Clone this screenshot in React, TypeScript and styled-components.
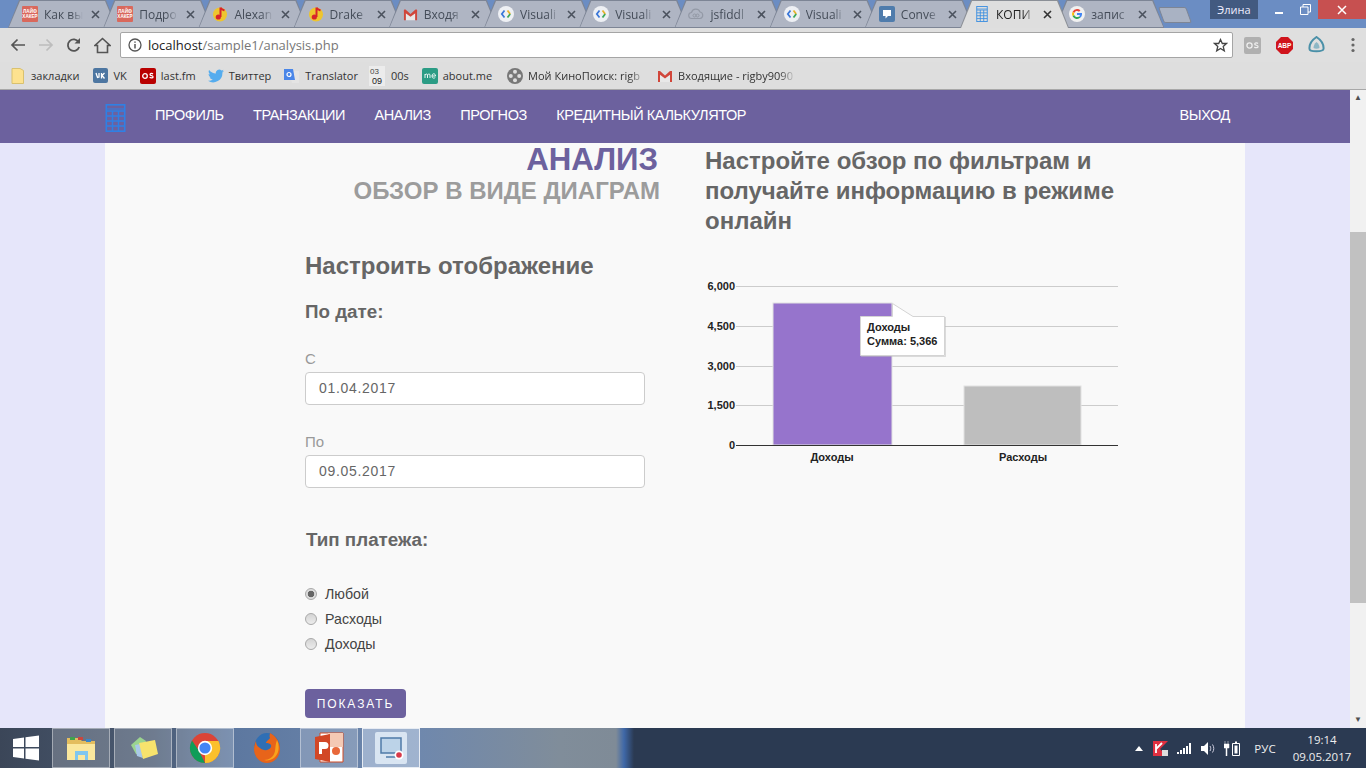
import styled, { createGlobalStyle } from 'styled-components'

const GlobalStyle = createGlobalStyle`
  html, body { margin: 0; padding: 0; height: 100%; overflow: hidden; }
  body { font-family: 'Liberation Sans', Arial, sans-serif; }
  * { box-sizing: border-box; }
`

const Screen = styled.div`
  width: 1366px;
  height: 768px;
  display: flex;
  flex-direction: column;
  overflow: hidden;
`

/* ---------- browser tabs ---------- */
const TabStrip = styled.div`
  height: 28px;
  flex: none;
  background: #6b8dc3;
  display: flex;
  align-items: flex-end;
  padding-left: 8px;
  position: relative;
`
const TabShape = styled.div<{ $active?: boolean }>`
  width: 109px;
  height: 28px;
  margin-right: -13.8px;
  flex: none;
  position: relative;
  display: flex;
  align-items: center;
  padding: 0 0 0 14px;
  gap: 6px;
  z-index: ${(p) => (p.$active ? 2 : 1)};
  clip-path: polygon(0 100%, 11px 0, calc(100% - 11px) 0, 100% 100%);
  background: ${(p) => (p.$active ? '#8b8f96' : '#7d8595')};
  &::before {
    content: '';
    position: absolute;
    inset: 1px 1px ${(p) => (p.$active ? '0' : '1px')} 1px;
    clip-path: polygon(0 100%, 11px 0, calc(100% - 11px) 0, 100% 100%);
    background: ${(p) => (p.$active ? '#dedede' : '#afb5c3')};
  }
  & > * { position: relative; }
  svg { flex: none; }
`
const TabTitle = styled.span<{ $active?: boolean }>`
  width: 39px;
  font-family: 'Open Sans', sans-serif;
  font-size: 12px;
  color: ${(p) => (p.$active ? '#222' : '#444c58')};
  white-space: nowrap;
  -webkit-mask-image: linear-gradient(to right, #000 70%, transparent);
  mask-image: linear-gradient(to right, #000 70%, transparent);
`
const TabClose = styled.span<{ $active?: boolean }>`
  width: 9px;
  height: 9px;
  margin-left: 2px;
  color: ${(p) => (p.$active ? '#333' : '#4b525e')};
  display: flex;
`
const NewTab = styled.div`
  width: 28px;
  height: 16px;
  margin: 0 0 5px 11px;
  flex: none;
  background: #a9b2c3;
  border: 1px solid #7d8595;
  border-radius: 2px;
  transform: skewX(20deg);
`
const WindowControls = styled.div`
  position: absolute;
  top: 0;
  right: 0;
  height: 20px;
  display: flex;
`
const UserName = styled.div`
  width: 48px;
  height: 19px;
  margin-right: 8px;
  background: #425a80;
  color: #eef;
  font-family: 'Open Sans', sans-serif;
  font-size: 11px;
  display: flex;
  align-items: center;
  justify-content: center;
`
const WinButton = styled.div<{ $close?: boolean }>`
  width: ${(p) => (p.$close ? '48px' : '26px')};
  height: 19px;
  display: flex;
  align-items: center;
  justify-content: center;
  background: ${(p) => (p.$close ? '#c75050' : 'transparent')};
  color: #fff;
`

/* ---------- toolbar ---------- */
const Toolbar = styled.div`
  height: 34px;
  flex: none;
  background: #dfdfdf;
  display: flex;
  align-items: center;
  padding: 0 0 0 8px;
`
const NavIcon = styled.div<{ $w: number }>`
  width: ${(p) => p.$w}px;
  height: 20px;
  display: flex;
  align-items: center;
  justify-content: center;
  flex: none;
`
const Omnibox = styled.div`
  width: 1113px;
  height: 26px;
  background: #fff;
  border: 1px solid #a5a5a5;
  border-radius: 2px;
  display: flex;
  align-items: center;
  padding: 0 5px 0 7px;
  font-family: 'Open Sans', sans-serif;
  font-size: 13px;
  color: #222;
`
const UrlHost = styled.span`
  margin-left: 6px;
`
const UrlPath = styled.span`
  color: #777;
  flex: 1;
`
const StarIcon = styled.svg`
  margin-right: -1px;
`
const Extensions = styled.div`
  flex: 1;
  display: flex;
  align-items: center;
  padding-left: 11px;
  gap: 15px;
`
const MenuDots = styled.svg`
  margin-left: 11px;
`

/* ---------- bookmarks ---------- */
const BookmarkBar = styled.div`
  height: 28px;
  flex: none;
  background: #dedede;
  border-bottom: 1px solid #a8a8a8;
  display: flex;
  align-items: center;
`
const Bookmark = styled.div<{ $left: number; $fade?: number }>`
  margin-left: ${(p) => p.$left}px;
  display: flex;
  align-items: center;
  gap: 5px;
  flex: none;
  font-family: 'Open Sans', sans-serif;
  font-size: 11px;
  color: #333;
  white-space: nowrap;
  svg { flex: none; }
  ${(p) =>
    p.$fade
      ? `width: ${p.$fade}px;
         -webkit-mask-image: linear-gradient(to right, #000 88%, transparent);
         mask-image: linear-gradient(to right, #000 88%, transparent);`
      : ''}
`
const BookmarkLabel = styled.span<{ $shift?: number }>`
  margin-left: ${(p) => p.$shift ?? 0}px;
`

/* ---------- the page ---------- */
const Viewport = styled.div`
  flex: 1;
  min-height: 0;
  display: flex;
  background: #e6e6fa;
`
const PageArea = styled.div`
  flex: 1;
  display: flex;
  flex-direction: column;
  min-width: 0;
`
const Navbar = styled.nav`
  height: 53px;
  flex: none;
  background: #6c619e;
  display: flex;
  align-items: center;
  padding: 0 120px 0 105px;
  svg { margin-top: 3px; }
`
const NavLinks = styled.div`
  display: flex;
  gap: 29.5px;
  margin-left: 29px;
  flex: 1;
`
const NavLink = styled.a`
  margin-top: -3px;
  color: #fff;
  font-size: 14.5px;
  letter-spacing: -0.42px;
  white-space: nowrap;
`
const Panel = styled.main`
  width: 1140px;
  margin-left: 105px;
  flex: 1;
  min-height: 0;
  overflow: hidden;
  background: #f9f9f9;
  display: grid;
  grid-template-columns: 555px 1fr;
  column-gap: 45px;
`
const LeftColumn = styled.section`
  padding: 3px 0 0 200px;
`
const RightColumn = styled.section`
  padding-top: 3px;
`
const PageTitle = styled.h1`
  margin: -1px 2px 1px 0;
  font-size: 31.2px;
  line-height: 30px;
  font-weight: 700;
  text-align: right;
  color: #6c619e;
`
const PageSubtitle = styled.h2`
  margin: 0;
  font-size: 24px;
  line-height: 30px;
  font-weight: 700;
  text-align: right;
  white-space: nowrap;
  color: #9c9c9c;
`
const Lead = styled.h2`
  margin: 0;
  width: 430px;
  font-size: 24px;
  line-height: 30px;
  font-weight: 700;
  color: #666;
`
const FormTitle = styled.h3`
  margin: 45px 0 0;
  font-size: 24px;
  line-height: 30px;
  font-weight: 700;
  color: #666;
`
const Subheading = styled.h4<{ $top: number; $left?: number }>`
  margin: ${(p) => p.$top}px 0 0 ${(p) => p.$left ?? 0}px;
  font-size: 18.8px;
  line-height: 24px;
  font-weight: 700;
  color: #666;
`
const FieldLabel = styled.label<{ $top: number }>`
  display: block;
  margin-top: ${(p) => p.$top}px;
  font-size: 15px;
  line-height: 18px;
  color: #999;
`
const DateInput = styled.div`
  width: 340px;
  height: 33px;
  margin-top: 4px;
  padding: 0 13px 1px;
  display: flex;
  align-items: center;
  background: #fff;
  border: 1px solid #ccc;
  border-radius: 4px;
  font-size: 14px;
  letter-spacing: 0.7px;
  color: #666;
`
const RadioList = styled.div`
  margin-top: 33px;
  display: flex;
  flex-direction: column;
  gap: 7px;
`
const RadioRow = styled.div`
  height: 18px;
  display: flex;
  align-items: center;
  gap: 8px;
  font-size: 14.2px;
  color: #444;
`
const RadioDot = styled.span<{ $on?: boolean }>`
  width: 12px;
  height: 12px;
  border-radius: 50%;
  border: 1px solid #a9a9a9;
  background: ${(p) =>
    p.$on
      ? 'radial-gradient(circle, #666 0 3px, #ddd 3.6px)'
      : 'linear-gradient(#d4d4d4, #ececec)'};
`
const ShowButton = styled.button`
  display: block;
  width: 101px;
  height: 29px;
  margin-top: 36px;
  padding: 0;
  border: 0;
  border-radius: 4px;
  background: #6c619e;
  color: #fff;
  font-family: 'Liberation Sans', sans-serif;
  font-size: 12px;
  letter-spacing: 1.9px;
`
const ChartBox = styled.div`
  margin: 40px 0 0 -5px;
  width: 430px;
  height: 190px;
`
const ChartSvg = styled.svg`
  display: block;
  text {
    font-family: 'Liberation Sans', sans-serif;
    font-size: 11px;
    font-weight: 700;
    fill: #222;
  }
`

/* ---------- scrollbar ---------- */
const ScrollBar = styled.div`
  width: 16px;
  flex: none;
  background: #f1f1f1;
  display: flex;
  flex-direction: column;
  align-items: center;
  color: #505050;
  font-size: 8px;
  line-height: 16px;
`
const ScrollArrow = styled.div`
  height: 16px;
  flex: none;
`
const ScrollTrack = styled.div`
  flex: 1;
  width: 100%;
  padding-top: 126px;
`
const ScrollThumb = styled.div`
  height: 371px;
  background: #c1c1c1;
`

/* ---------- taskbar ---------- */
const Taskbar = styled.footer`
  height: 40px;
  flex: none;
  display: flex;
  align-items: stretch;
  background: linear-gradient(
    90deg,
    #3b4658 0,
    #4a5a72 150px,
    #5d78a0 236px,
    #6f88ad 420px,
    #808d9a 560px,
    #7f8b97 616px,
    #3f68a8 624px,
    #2b3a52 634px,
    #2b3a52 100%
  );
`
const StartButton = styled.div`
  width: 52px;
  flex: none;
  display: flex;
  align-items: center;
  justify-content: center;
`
const TaskApps = styled.div`
  display: flex;
  gap: 4px;
  flex: 1;
`
const TaskApp = styled.div<{ $state?: 'open' | 'active' | 'plain' }>`
  width: 58px;
  display: flex;
  align-items: center;
  justify-content: center;
  border: 1px solid
    ${(p) =>
      p.$state === 'plain'
        ? 'transparent'
        : p.$state === 'active'
          ? 'rgba(255,255,255,0.75)'
          : 'rgba(255,255,255,0.4)'};
  background: ${(p) =>
    p.$state === 'plain'
      ? 'transparent'
      : p.$state === 'active'
        ? 'rgba(200,215,235,0.55)'
        : 'rgba(255,255,255,0.2)'};
`
const Tray = styled.div`
  display: flex;
  align-items: center;
  color: #fff;
`
const TrayItem = styled.div<{ $w: number }>`
  width: ${(p) => p.$w}px;
  display: flex;
  justify-content: center;
  flex: none;
`
const TrayLang = styled.span`
  width: 42px;
  text-align: center;
  font-family: 'Open Sans', sans-serif;
  font-size: 11.5px;
  color: #eee;
`
const Clock = styled.div`
  width: 80px;
  padding-right: 8px;
  text-align: center;
  font-family: 'Open Sans', sans-serif;
  font-size: 11.5px;
  line-height: 17px;
  color: #eee;
`

/* ---------- icons ---------- */
type IconKind = 'life' | 'music' | 'gmail' | 'visual' | 'cloud' | 'conv' | 'calc' | 'google'

const FaviconLabel = styled.text`
  font-family: 'Liberation Sans', sans-serif;
  font-size: 4.6px;
  font-weight: 700;
  fill: #fff;
`

function GmailMark({ size = 15 }: { size?: number }) {
  return (
    <svg width={size} height={size} viewBox="0 0 16 16">
      <path d="M3 5l5 4 5-4v9H3z" fill="#e8e8e8" />
      <path d="M1 3h2v11H1zM13 3h2v11h-2z" fill="#d1463a" />
      <path d="M1 3h2l5 4.500L13 3h2v2.200L8 10.500 1 5.200z" fill="#d1463a" />
    </svg>
  )
}

function GoogleMark() {
  return (
    <svg width={16} height={16} viewBox="0 0 16 16">
      <circle cx="8" cy="8" r="8" fill="#f1f1f1" />
      <path d="M8 3a5 5 0 0 1 3.400 1.300L10 5.700A3 3 0 0 0 5.200 7L3.600 5.700A5 5 0 0 1 8 3z" fill="#ea4335" />
      <path d="M3.600 5.700L5.200 7a3 3 0 0 0 0 2L3.600 10.300a5 5 0 0 1 0-4.600z" fill="#fbbc05" />
      <path d="M3.600 10.300L5.200 9A3 3 0 0 0 10 10.400l1.500 1.200A5 5 0 0 1 3.600 10.300z" fill="#34a853" />
      <path d="M8 7h5v1.500a5 5 0 0 1-1.500 3.100L10 10.400A2.500 2.500 0 0 0 11 9H8z" fill="#4285f4" />
    </svg>
  )
}

function CalcMark({ color = '#3b8ee0', w = 16, h = 16 }: { color?: string; w?: number; h?: number }) {
  return (
    <svg width={w} height={h} viewBox="0 0 20 28">
      <rect x="0.800" y="0.800" width="18.400" height="26.400" fill="none" stroke={color} strokeWidth="1.600" />
      <path d="M1 7h18M1 12h18M1 17h18M1 22h18M7 7v20M13 7v20" stroke={color} strokeWidth="1.500" />
      <path d="M1 5h18" stroke={color} strokeWidth="1" />
    </svg>
  )
}

function Favicon({ kind }: { kind: IconKind }) {
  switch (kind) {
    case 'life':
      return (
        <svg width={16} height={16} viewBox="0 0 16 16">
          <rect width="16" height="16" rx="1" fill="#d9685c" />
          <FaviconLabel x="8" y="7.200" textAnchor="middle">
            ЛАЙФ
          </FaviconLabel>
          <FaviconLabel x="8" y="12.200" textAnchor="middle">
            ХАКЕР
          </FaviconLabel>
        </svg>
      )
    case 'music':
      return (
        <svg width={16} height={16} viewBox="0 0 16 16">
          <circle cx="8" cy="8.500" r="7" fill="#eec52e" />
          <path d="M8.500 1.500v9.500M8.500 1.500c.5 2 3 2.500 4 3" stroke="#d8232a" strokeWidth="2" fill="none" />
          <circle cx="6.300" cy="11" r="2.600" fill="#d8232a" />
        </svg>
      )
    case 'gmail':
      return <GmailMark />
    case 'visual':
      return (
        <svg width={16} height={16} viewBox="0 0 16 16">
          <circle cx="8" cy="8" r="8" fill="#eef0f4" />
          <path d="M6.500 4.500L3.800 8l2.700 3.500" stroke="#3c78d8" strokeWidth="1.800" fill="none" />
          <path d="M9.500 4.500L12.200 8" stroke="#e8b32c" strokeWidth="1.800" fill="none" />
          <path d="M12.200 8L9.500 11.500" stroke="#3ea85a" strokeWidth="1.800" fill="none" />
        </svg>
      )
    case 'cloud':
      return (
        <svg width={16} height={16} viewBox="0 0 16 16">
          <path
            d="M4 12.500a3 3 0 0 1-.5-6A4.500 4.500 0 0 1 12 6a3.300 3.300 0 0 1 0 6.500z"
            fill="none"
            stroke="#9399a6"
            strokeWidth="1.200"
          />
          <circle cx="6.500" cy="9.500" r="1.500" fill="none" stroke="#9399a6" />
          <circle cx="9.500" cy="9.500" r="1.500" fill="none" stroke="#9399a6" />
        </svg>
      )
    case 'conv':
      return (
        <svg width={16} height={16} viewBox="0 0 16 16">
          <rect width="16" height="16" rx="2" fill="#4f7cac" />
          <path d="M4 4h8v6H9l-2.500 2.500V10H4z" fill="#fff" />
        </svg>
      )
    case 'calc':
      return <CalcMark />
    case 'google':
      return <GoogleMark />
  }
}

function CloseX() {
  return (
    <svg width={9} height={9} viewBox="0 0 9 9">
      <path d="M1 1l7 7M8 1L1 8" stroke="currentColor" strokeWidth="1.600" />
    </svg>
  )
}

const TABS: { kind: IconKind; title: string; active?: boolean }[] = [
  { kind: 'life', title: 'Как вы' },
  { kind: 'life', title: 'Подро' },
  { kind: 'music', title: 'Alexan' },
  { kind: 'music', title: 'Drake' },
  { kind: 'gmail', title: 'Входя' },
  { kind: 'visual', title: 'Visuali' },
  { kind: 'visual', title: 'Visuali' },
  { kind: 'cloud', title: 'jsfiddl' },
  { kind: 'visual', title: 'Visuali' },
  { kind: 'conv', title: 'Conve' },
  { kind: 'calc', title: 'КОПИ', active: true },
  { kind: 'google', title: 'запис' },
]

const NAV = ['ПРОФИЛЬ', 'ТРАНЗАКЦИИ', 'АНАЛИЗ', 'ПРОГНОЗ', 'КРЕДИТНЫЙ КАЛЬКУЛЯТОР']

function Chart() {
  const grid = [
    { y: 10.5, label: '6,000' },
    { y: 50.5, label: '4,500' },
    { y: 90.5, label: '3,000' },
    { y: 129.5, label: '1,500' },
  ]
  return (
    <ChartSvg width={430} height={190} viewBox="0 0 430 190">
      {grid.map((g) => (
        <g key={g.label}>
          <line x1="36" x2="418" y1={g.y} y2={g.y} stroke="#cccccc" />
          <text x="35" y={g.y + 3.5} textAnchor="end">
            {g.label}
          </text>
        </g>
      ))}
      <rect x="73" y="27" width="119" height="142" fill="#9674cc" stroke="#e2e2e2" />
      <rect x="264" y="110" width="117" height="59" fill="#bebebe" stroke="#e2e2e2" />
      <line x1="36" x2="418" y1="169.500" y2="169.500" stroke="#333" />
      <text x="35" y="173" textAnchor="end">
        0
      </text>
      <text x="132" y="184.500" textAnchor="middle">
        Доходы
      </text>
      <text x="323" y="184.500" textAnchor="middle">
        Расходы
      </text>
      <path
        d="M160.500 40.500H192.500L192.500 27.500L213 40.500H244.500V79.500H160.500Z"
        fill="#fff"
        stroke="#d4d4d4"
      />
      <path d="M161 80.500H245.500V41" fill="none" stroke="#bbb" strokeOpacity="0.500" />
      <text x="167" y="55">
        Доходы
      </text>
      <text x="167" y="69">
        Сумма: 5,366
      </text>
    </ChartSvg>
  )
}

export default function App() {
  return (
    <Screen>
      <GlobalStyle />
      <TabStrip>
        {TABS.map((t, i) => (
          <TabShape key={i} $active={t.active}>
            <Favicon kind={t.kind} />
            <TabTitle $active={t.active}>{t.title}</TabTitle>
            <TabClose $active={t.active}>
              <CloseX />
            </TabClose>
          </TabShape>
        ))}
        <NewTab />
        <WindowControls>
          <UserName>Элина</UserName>
          <WinButton>
            <svg width={10} height={10} viewBox="0 0 10 10">
              <path d="M1 8h8" stroke="#fff" strokeWidth="2" />
            </svg>
          </WinButton>
          <WinButton>
            <svg width={11} height={11} viewBox="0 0 11 11">
              <path d="M.5 3h7.500v7.500H.5zM3 3V.5h7.500V8H8" fill="none" stroke="#fff" />
            </svg>
          </WinButton>
          <WinButton $close>
            <svg width={10} height={10} viewBox="0 0 10 10">
              <path d="M1 1l8 8M9 1L1 9" stroke="#fff" strokeWidth="1.500" />
            </svg>
          </WinButton>
        </WindowControls>
      </TabStrip>

      <Toolbar>
        <NavIcon $w={20}>
          <svg width={16} height={16} viewBox="0 0 16 16">
            <path d="M15 8H2M7.500 2.500L2 8l5.500 5.500" fill="none" stroke="#555" strokeWidth="1.700" />
          </svg>
        </NavIcon>
        <NavIcon $w={36}>
          <svg width={16} height={16} viewBox="0 0 16 16">
            <path d="M1 8h13M8.500 2.500L14 8l-5.500 5.500" fill="none" stroke="#bdbdbd" strokeWidth="1.700" />
          </svg>
        </NavIcon>
        <NavIcon $w={20}>
          <svg width={16} height={16} viewBox="0 0 16 16">
            <path d="M13.200 10a5.800 5.800 0 1 1-.6-5" fill="none" stroke="#555" strokeWidth="1.800" />
            <path d="M14 1v5.500H8.500z" fill="#555" />
          </svg>
        </NavIcon>
        <NavIcon $w={36}>
          <svg width={17} height={17} viewBox="0 0 17 17">
            <path d="M8.500 1.500L1 8.500h2.500v7h10v-7H16z" fill="none" stroke="#555" strokeWidth="1.600" />
          </svg>
        </NavIcon>
        <Omnibox>
          <svg width={14} height={14} viewBox="0 0 14 14">
            <circle cx="7" cy="7" r="6" fill="none" stroke="#555" strokeWidth="1.300" />
            <path d="M7 6v4.500M7 3.500v1.300" stroke="#555" strokeWidth="1.500" />
          </svg>
          <UrlHost>localhost</UrlHost>
          <UrlPath>/sample1/analysis.php</UrlPath>
          <StarIcon width={15} height={15} viewBox="0 0 15 15">
            <path d="M7.500 1.500l1.800 4h4.200l-3.300 2.900 1.100 4.400-3.800-2.400-3.800 2.400 1.100-4.400L1.500 5.500h4.200z" fill="none" stroke="#444" strokeWidth="1.300" />
          </StarIcon>
        </Omnibox>
        <Extensions>
          <svg width={17} height={17} viewBox="0 0 17 17">
            <rect width="17" height="17" rx="2" fill="#b0b0b0" />
            <circle cx="5.500" cy="8.500" r="2.600" fill="none" stroke="#eee" strokeWidth="1.300" />
            <path d="M14 6.500c-1-1-3.500-.8-3.300.7.200 1.400 3.500.8 3.400 2.400-.1 1.400-2.800 1.400-3.800.4" fill="none" stroke="#eee" strokeWidth="1.200" />
          </svg>
          <svg width={17} height={17} viewBox="0 0 17 17">
            <path d="M5 0h7l5 5v7l-5 5H5l-5-5V5z" fill="#d0141c" />
            <text x="8.500" y="11" textAnchor="middle" fontFamily="Liberation Sans" fontSize="6.500" fontWeight="700" fill="#fff">
              ABP
            </text>
          </svg>
          <svg width={17} height={18} viewBox="0 0 17 18">
            <path d="M8.500 1C13 4 16 8 15.500 13c-.3 3-14 3-14 0C1 8 4 4 8.500 1z" fill="none" stroke="#4a90a8" strokeWidth="2" />
            <path d="M8.500 6c2 1.500 3 3.500 3 6-1.500 1-4.500 1-6 0 0-2.500 1-4.500 3-6z" fill="#8db7c5" />
          </svg>
          <MenuDots width={4} height={16} viewBox="0 0 4 16">
            <circle cx="2" cy="2.500" r="1.600" fill="#666" />
            <circle cx="2" cy="8" r="1.600" fill="#666" />
            <circle cx="2" cy="13.500" r="1.600" fill="#666" />
          </MenuDots>
        </Extensions>
      </Toolbar>

      <BookmarkBar>
        <Bookmark $left={11}>
          <svg width={13} height={16} viewBox="0 0 13 16">
            <path d="M1 .5h8l3.500 2v13H1z" fill="#fde28f" stroke="#d9c16f" />
          </svg>
          <BookmarkLabel $shift={2}>закладки</BookmarkLabel>
        </Bookmark>
        <Bookmark $left={13}>
          <svg width={15} height={15} viewBox="0 0 15 15">
            <rect width="15" height="15" rx="2" fill="#4d76a1" />
            <path d="M3 5l1.500 4.500L6 9V5M11.500 5L9 7.500l2.500 3M8.500 5v5.500" fill="none" stroke="#fff" strokeWidth="1.300" />
          </svg>
          <BookmarkLabel $shift={1}>VK</BookmarkLabel>
        </Bookmark>
        <Bookmark $left={13}>
          <svg width={16} height={16} viewBox="0 0 16 16">
            <rect width="16" height="16" rx="2" fill="#b90000" />
            <circle cx="5" cy="8" r="2.300" fill="none" stroke="#fff" strokeWidth="1.300" />
            <path d="M13 6c-1-1-3.200-.7-3 .7.200 1.300 3.200.7 3.100 2.200-.1 1.300-2.500 1.300-3.500.4" fill="none" stroke="#fff" strokeWidth="1.200" />
          </svg>
          <span>last.fm</span>
        </Bookmark>
        <Bookmark $left={12}>
          <svg width={16} height={14} viewBox="0 0 16 14">
            <path d="M16 2c-.6.300-1.200.4-1.900.5.700-.4 1.200-1 1.400-1.800-.6.400-1.300.6-2 .8a3.300 3.300 0 0 0-5.600 3C5.200 4.300 2.800 3 1.100.9c-.9 1.500-.4 3.400 1 4.400-.5 0-1-.2-1.500-.4 0 1.600 1.100 3 2.600 3.300-.5.100-1 .1-1.500 0 .4 1.300 1.600 2.200 3.100 2.300A6.600 6.600 0 0 1 0 11.800 9.300 9.300 0 0 0 14.400 3.500c.6-.4 1.200-.9 1.600-1.500z" fill="#55acee" />
          </svg>
          <span>Твиттер</span>
        </Bookmark>
        <Bookmark $left={13}>
          <svg width={16} height={16} viewBox="0 0 16 16">
            <path d="M5 3h10v12H8z" fill="#e4e4e4" />
            <path d="M0 1h9l2 11H0z" fill="#4a86e8" />
            <circle cx="5" cy="6.500" r="2" fill="none" stroke="#fff" strokeWidth="1.200" />
          </svg>
          <span>Translator</span>
        </Bookmark>
        <Bookmark $left={11}>
          <svg width={16} height={20} viewBox="0 0 16 20">
            <rect width="16" height="20" fill="#ececec" />
            <text x="1" y="8" fontFamily="Liberation Sans" fontSize="8" fill="#444">
              03
            </text>
            <text x="3" y="18" fontFamily="Liberation Sans" fontSize="9" fill="#222">
              09
            </text>
          </svg>
          <BookmarkLabel $shift={1}>00s</BookmarkLabel>
        </Bookmark>
        <Bookmark $left={13}>
          <svg width={16} height={16} viewBox="0 0 16 16">
            <rect width="16" height="16" rx="2" fill="#2b9c85" />
            <path d="M3 6v4M3 7c1-1.500 2.500-1 2.500 0v3M5.500 7c1-1.500 2.500-1 2.500 0v3M10 8h3.500c0-3-3.500-3-3.500 0 0 2.500 2 2.500 3.300 1.500" fill="none" stroke="#fff" strokeWidth="0.900" />
          </svg>
          <span>about.me</span>
        </Bookmark>
        <Bookmark $left={15} $fade={139}>
          <svg width={16} height={16} viewBox="0 0 16 16">
            <circle cx="8" cy="8" r="8" fill="#777" />
            <circle cx="8" cy="3.800" r="2" fill="#ddd" />
            <circle cx="8" cy="12.200" r="2" fill="#ddd" />
            <circle cx="3.800" cy="8" r="2" fill="#ddd" />
            <circle cx="12.200" cy="8" r="2" fill="#ddd" />
          </svg>
          <span>Мой КиноПоиск: rigb</span>
        </Bookmark>
        <Bookmark $left={11} $fade={139}>
          <GmailMark size={16} />
          <span>Входящие - rigby9090</span>
        </Bookmark>
      </BookmarkBar>

      <Viewport>
        <PageArea>
          <Navbar>
            <CalcMark w={21} h={28} color="#2f80e4" />
            <NavLinks>
              {NAV.map((n) => (
                <NavLink key={n}>{n}</NavLink>
              ))}
            </NavLinks>
            <NavLink>ВЫХОД</NavLink>
          </Navbar>
          <Panel>
            <LeftColumn>
              <PageTitle>АНАЛИЗ</PageTitle>
              <PageSubtitle>ОБЗОР В ВИДЕ ДИАГРАМ</PageSubtitle>
              <FormTitle>Настроить отображение</FormTitle>
              <Subheading $top={19}>По дате:</Subheading>
              <FieldLabel $top={26}>С</FieldLabel>
              <DateInput>01.04.2017</DateInput>
              <FieldLabel $top={28}>По</FieldLabel>
              <DateInput>09.05.2017</DateInput>
              <Subheading $top={40} $left={1}>
                Тип платежа:
              </Subheading>
              <RadioList>
                <RadioRow>
                  <RadioDot $on />
                  Любой
                </RadioRow>
                <RadioRow>
                  <RadioDot />
                  Расходы
                </RadioRow>
                <RadioRow>
                  <RadioDot />
                  Доходы
                </RadioRow>
              </RadioList>
              <ShowButton>ПОКАЗАТЬ</ShowButton>
            </LeftColumn>
            <RightColumn>
              <Lead>Настройте обзор по фильтрам и получайте информацию в режиме онлайн</Lead>
              <ChartBox>
                <Chart />
              </ChartBox>
            </RightColumn>
          </Panel>
        </PageArea>
        <ScrollBar>
          <ScrollArrow>▲</ScrollArrow>
          <ScrollTrack>
            <ScrollThumb />
          </ScrollTrack>
          <ScrollArrow>▼</ScrollArrow>
        </ScrollBar>
      </Viewport>

      <Taskbar>
        <StartButton>
          <svg width={26} height={26} viewBox="0 0 26 26">
            <path d="M0 4l11-1.500V12H0zM12.500 2.300L26 .5V12H12.500zM0 13.500h11v10L0 22zM12.500 13.500H26V25.500L12.500 23.700z" fill="#fff" />
          </svg>
        </StartButton>
        <TaskApps>
          <TaskApp $state="open">
            <svg width={32} height={32} viewBox="0 0 32 32">
              <path d="M2 6h12l3 3h13v19H2z" fill="#e3bd5e" />
              <path d="M2 12h28v16H2z" fill="#fae79d" />
              <path d="M5 5h5v3H5z" fill="#3fa34d" />
              <path d="M13 5h5v3h-5z" fill="#c9463d" />
              <path d="M21 7h5v3h-5z" fill="#3a86c8" />
              <path d="M10 19h13v9h-3v-5h-7v5h-3z" fill="#7fc6ee" />
            </svg>
          </TaskApp>
          <TaskApp $state="open">
            <svg width={32} height={32} viewBox="0 0 32 32">
              <path d="M4 13L13 5l6 4-4 14-6-1z" fill="#9bd48f" />
              <path d="M8 13l5-1 3 14-6-2z" fill="#a9c9e8" />
              <path d="M12 11l16-3 3 14-15 5z" fill="#f7e36d" />
            </svg>
          </TaskApp>
          <TaskApp $state="open">
            <svg width={32} height={32} viewBox="0 0 32 32">
              <circle cx="16" cy="16" r="15" fill="#db4437" />
              <path d="M16 9H29.500A15 15 0 0 1 16 31z" fill="#fbc02d" />
              <path d="M16 31A15 15 0 0 1 3 8.500L10 19z" fill="#0f9d58" />
              <circle cx="16" cy="16" r="7.200" fill="#fff" />
              <circle cx="16" cy="16" r="5.600" fill="#4285f4" />
            </svg>
          </TaskApp>
          <TaskApp $state="plain">
            <svg width={30} height={34} viewBox="0 0 30 34">
              <ellipse cx="15" cy="17" rx="13" ry="15" fill="#2f6fb5" />
              <path d="M18 2c6 3 10 9 10 16 0 8-6 14-13 14S2 26 2 18c0-3 1-6 2-8 0 4 2 6 4 7 3 3 9 3 11-1 1-3-2-4-5-4 0-2 3-3 4-5-1-2 0-4 0-5z" fill="#e8641a" />
              <path d="M25 9c3 6 2 14-3 18-3 2-7 3-10 2 5 0 10-3 11-9 .5-4 .5-7 2-11z" fill="#f8a21b" />
            </svg>
          </TaskApp>
          <TaskApp $state="open">
            <svg width={30} height={32} viewBox="0 0 30 32">
              <path d="M6 1h23v29H6z" fill="#fff" stroke="#d14a24" />
              <path d="M14 1h15v14H14z" fill="#f4c9b4" />
              <path d="M1 5l15-3v28L1 27z" fill="#d24726" />
              <path d="M5 10h6a3.500 3.500 0 0 1 0 7H8v5H5z" fill="#fff" />
              <circle cx="22" cy="19" r="4" fill="#e8683a" />
            </svg>
          </TaskApp>
          <TaskApp $state="active">
            <svg width={32} height={32} viewBox="0 0 32 32">
              <rect width="32" height="32" rx="2" fill="#d9e5f2" />
              <path d="M6 6h20v15H6z" fill="#bcd3e8" stroke="#4f7ba8" strokeWidth="1.500" />
              <path d="M11 25h10" stroke="#4f7ba8" strokeWidth="1.500" />
              <circle cx="24" cy="23" r="4.500" fill="#fff" />
              <circle cx="24" cy="23" r="2.800" fill="#d83a4a" />
            </svg>
          </TaskApp>
        </TaskApps>
        <Tray>
          <TrayItem $w={18}>
            <svg width={8} height={5} viewBox="0 0 8 5">
              <path d="M0 5l4-5 4 5z" fill="#fff" />
            </svg>
          </TrayItem>
          <TrayItem $w={24}>
            <svg width={15} height={15} viewBox="0 0 15 15">
              <path d="M0 0h15L7 8l7 7H0z" fill="#e03040" />
              <path d="M9 9h6v6H9z" fill="#ddd" />
              <path d="M3 3v9M3 8l6-6" stroke="#fff" strokeWidth="1.800" />
            </svg>
          </TrayItem>
          <TrayItem $w={24}>
            <svg width={15} height={11} viewBox="0 0 15 11">
              <path d="M0 9h2v2H0zM3 7h2v4H3zM6 5h2v6H6zM9 3h2v8H9zM12 0h2v11h-2z" fill="#fff" />
            </svg>
          </TrayItem>
          <TrayItem $w={24}>
            <svg width={15} height={13} viewBox="0 0 15 13">
              <path d="M0 4h3l4-4v13L3 9H0z" fill="#fff" />
              <path d="M9 4c1 1.500 1 3.500 0 5M11.500 2.500c1.700 2.500 1.700 5.500 0 8" fill="none" stroke="#ccd" />
            </svg>
          </TrayItem>
          <TrayItem $w={24}>
            <svg width={16} height={15} viewBox="0 0 16 15">
              <path d="M1 0v3M4 0v3M0 3h5v4H3v8H2V7H0z" fill="#fff" stroke="#fff" strokeWidth="0.500" />
              <path d="M8.500 2.500h7v12h-7z" fill="none" stroke="#fff" />
              <path d="M10.500 4.500h3v8h-3zM11 .500h2v2h-2z" fill="#fff" />
            </svg>
          </TrayItem>
          <TrayLang>РУС</TrayLang>
          <Clock>
            <div>19:14</div>
            <div>09.05.2017</div>
          </Clock>
        </Tray>
      </Taskbar>
    </Screen>
  )
}
